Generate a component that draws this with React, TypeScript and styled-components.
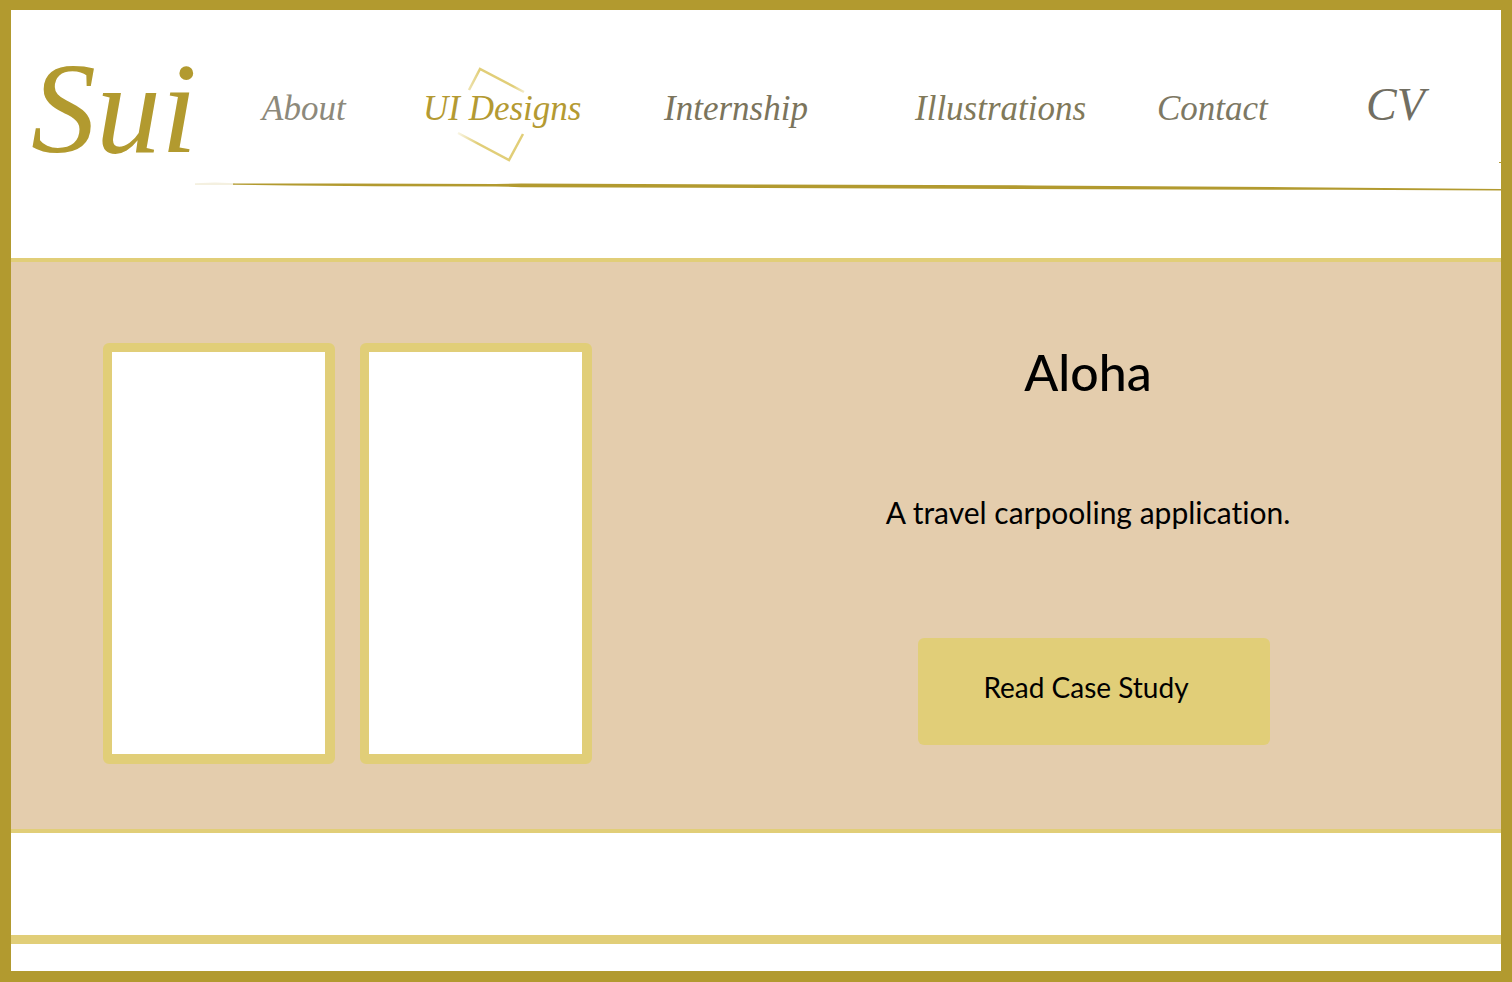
import React from "react";
import styled, { createGlobalStyle } from "styled-components";

const gold = "#b29a2f";
const sand = "#e1ce78";

const GlobalStyle = createGlobalStyle`
  *, *::before, *::after { box-sizing: border-box; }
  body { margin: 0; background: #fff; }
`;

const Page = styled.div`
  display: flex;
  flex-direction: column;
  min-height: 100vh;
  border: solid ${gold};
  border-width: 10px 11px 11px;
  background: #fff;
  color: #000;
  font-family: Lato, "Liberation Sans", sans-serif;
  font-variant-ligatures: none;
`;

const Header = styled.header`
  min-height: 248px;
  padding-top: 34px;
`;

const TopRow = styled.div`
  display: grid;
  grid-template-columns: 251fr 1239fr;
  align-items: start;
  font-family: "Liberation Serif", "Times New Roman", serif;
  font-style: italic;
`;

const Logo = styled.a`
  padding-left: 20px;
  color: ${gold};
  font-size: 130px;
  line-height: 128px;
  text-decoration: none;
`;

const NavList = styled.ul`
  display: grid;
  grid-template-columns: 161fr 241fr 251fr 242fr 209fr 135fr;
  align-items: baseline;
  margin: 0;
  padding: 41px 0 0;
  list-style: none;
`;

const NavLink = styled.a<{ $color: string; $large?: boolean }>`
  position: relative;
  display: inline-block;
  color: ${(p) => p.$color};
  font-size: ${(p) => (p.$large ? 46 : 35)}px;
  line-height: 40px;
  text-decoration: none;
  white-space: nowrap;
`;

const Diamond = styled.svg`
  position: absolute;
  top: -26px;
  left: 32px;
  width: 72px;
  height: 100px;
  pointer-events: none;
`;

const Stroke = styled.svg`
  display: block;
  width: calc(100% - 184px);
  height: 34px;
  margin: -14px 0 0 184px;
`;

const Hero = styled.main`
  display: flex;
  align-items: flex-start;
  gap: 83px;
  padding: 81px 0 65px 92px;
  border: solid ${sand};
  border-width: 4px 0;
  background: #e4cdad;
`;

const Screens = styled.div`
  display: flex;
  gap: 25px;
`;

const Screen = styled.div`
  width: 232px;
  height: 421px;
  border: solid ${sand};
  border-width: 9px 10px 10px 9px;
  border-radius: 6px;
  background: #fff;
`;

const Project = styled.section`
  display: flex;
  flex: 1;
  flex-direction: column;
  align-items: center;
  text-align: center;
`;

const Title = styled.h1`
  margin: 0;
  font-size: 50px;
  font-weight: 500;
  line-height: 58px;
`;

const Summary = styled.p`
  margin: 91px 0 0;
  font-size: 30px;
  line-height: 40px;
`;

const CaseButton = styled.button`
  width: 352px;
  height: 107px;
  margin: 106px 0 0 12px;
  padding: 0 16px 10px 0;
  border: 0;
  border-radius: 6px;
  background: ${sand};
  color: #000;
  font-family: inherit;
  font-size: 28px;
  line-height: 40px;
  cursor: pointer;
`;

const Footer = styled.footer`
  display: flex;
  flex: 1;
  flex-direction: column;
  justify-content: flex-end;
  min-height: 138px;
  padding-bottom: 27px;
`;

const FooterRule = styled.hr`
  width: 100%;
  height: 9px;
  margin: 0;
  border: 0;
  background: ${sand};
`;

const links = [
  { label: "About", color: "#8d897b" },
  { label: "UI Designs", color: "#b49a32", active: true },
  { label: "Internship", color: "#7b745c" },
  { label: "Illustrations", color: "#817959" },
  { label: "Contact", color: "#7d7864" },
  { label: "CV", color: "#716e62", large: true },
];

function ActiveMark() {
  return (
    <Diamond viewBox="0 0 72 100" fill="none" strokeWidth="2.5" aria-hidden="true">
      <defs>
        <linearGradient id="markTop" x1="0" y1="0" x2="1" y2="0">
          <stop offset="0" stopColor={sand} stopOpacity="0.6" />
          <stop offset="0.2" stopColor={sand} />
          <stop offset="0.8" stopColor={sand} />
          <stop offset="1" stopColor={sand} stopOpacity="0.4" />
        </linearGradient>
        <linearGradient id="markBottom" x1="0" y1="0" x2="1" y2="0">
          <stop offset="0" stopColor={sand} stopOpacity="0.2" />
          <stop offset="0.3" stopColor={sand} />
          <stop offset="1" stopColor={sand} />
        </linearGradient>
      </defs>
      <path d="M14 27 25 6 69 29" stroke="url(#markTop)" />
      <path d="M3 70 54 97 68 71" stroke="url(#markBottom)" />
    </Diamond>
  );
}

export default function App() {
  return (
    <>
      <GlobalStyle />
      <Page>
        <Header>
          <TopRow>
            <Logo href="#home">Sui</Logo>
            <nav aria-label="Main">
              <NavList>
                {links.map((l) => (
                  <li key={l.label}>
                    <NavLink
                      href={"#" + l.label.toLowerCase().replace(" ", "-")}
                      $color={l.color}
                      $large={l.large}
                      aria-current={l.active ? "page" : undefined}
                    >
                      {l.active && <ActiveMark />}
                      {l.label}
                    </NavLink>
                  </li>
                ))}
              </NavList>
            </nav>
          </TopRow>
          <Stroke viewBox="0 0 1306 34" preserveAspectRatio="none" aria-hidden="true">
            <path d="M0 25.3 20 24.6 40 25.2V27H0Z" fill={gold} opacity="0.15" />
            <path
              d="M38 25.6 150 25.6 300 26 326 25.6 560 26.4 840 27.4 1100 29.2 1306 31V32.5L1140 31.8 900 31.2 700 30.4 500 29.7 326 29.2 300 28.4 180 28.2 96 27.6 38 26.8Z"
              fill={gold}
            />
            <path d="M1304 4.5H1306" stroke={gold} />
          </Stroke>
        </Header>
        <Hero>
          <Screens>
            <Screen />
            <Screen />
          </Screens>
          <Project>
            <Title>Aloha</Title>
            <Summary>A travel carpooling application.</Summary>
            <CaseButton type="button">Read Case Study</CaseButton>
          </Project>
        </Hero>
        <Footer>
          <FooterRule />
        </Footer>
      </Page>
    </>
  );
}
